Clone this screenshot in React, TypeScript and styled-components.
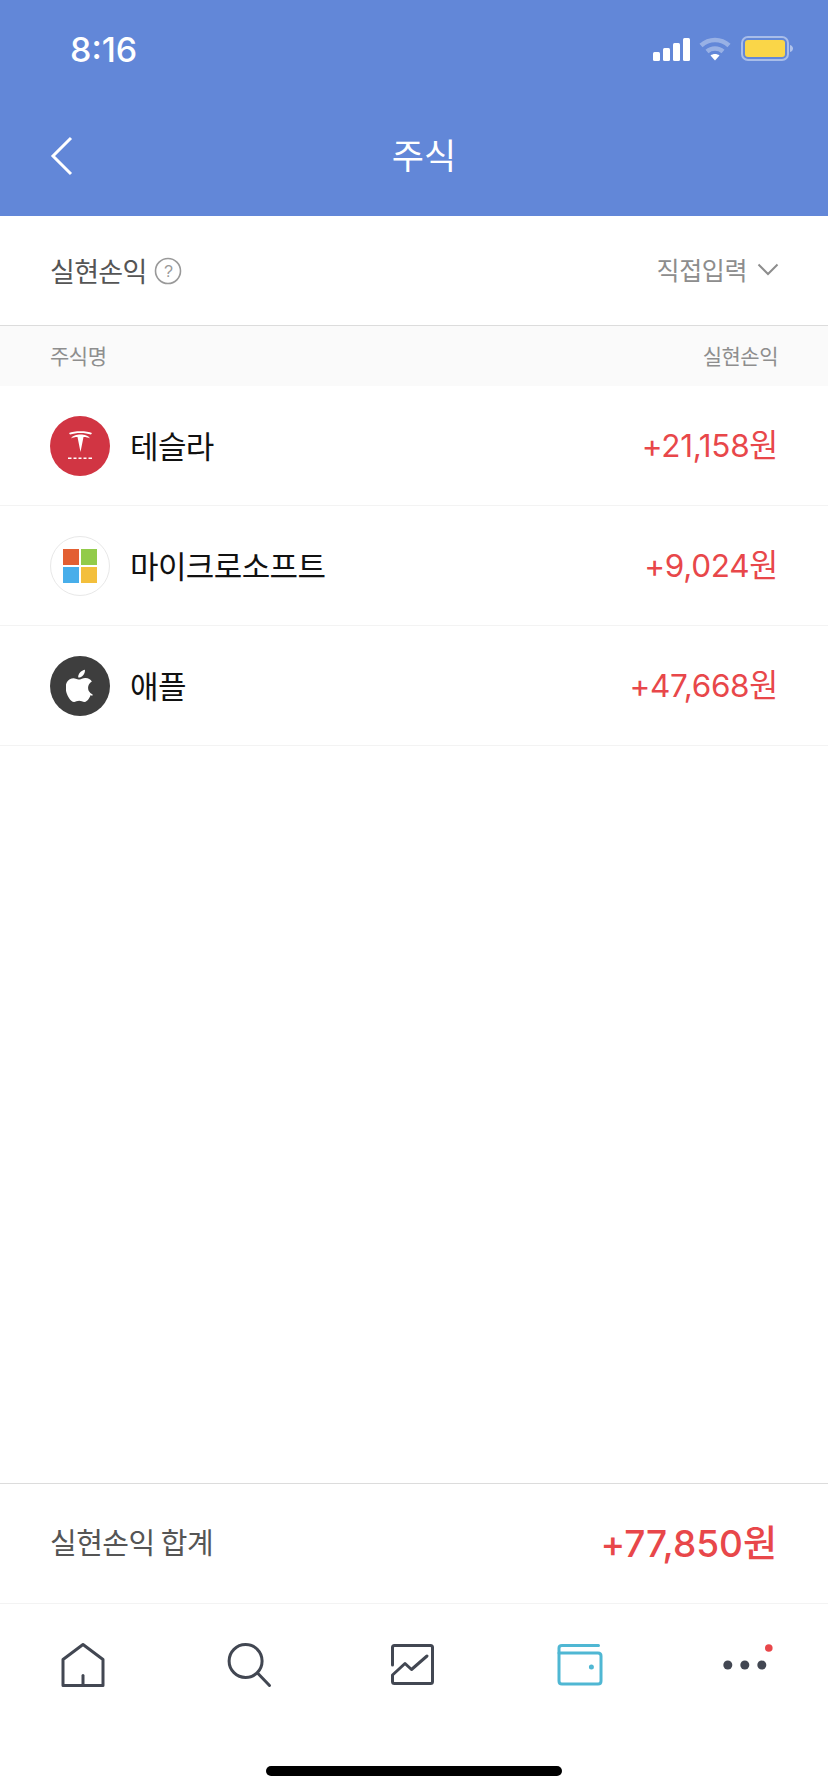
import React from "react";
import styled, { createGlobalStyle } from "styled-components";

const Global = createGlobalStyle`
  html, body { margin: 0; padding: 0; background: #fff; }
  * { box-sizing: border-box; }
`;
const KR = `"Noto Sans CJK KR", "Noto Sans", sans-serif`;
const NUM = `Inter, "Noto Sans CJK KR", sans-serif`;

const Page = styled.div`
  width: 828px; height: 1792px; display: flex; flex-direction: column; font-family: ${KR}; background: #fff; overflow: hidden;
`;
const Header = styled.header`
  height: 216px; background: #6287d8; display: flex; flex-direction: column; flex: none;
`;
const StatusBar = styled.div`
  height: 100px; padding: 29px 34px 0 70px; display: flex; align-items: flex-start; justify-content: space-between;
`;
const Time = styled.span`
  color: #fff; font: 500 34px/42px Inter, sans-serif;
`;
const StatusIcons = styled.div`
  display: flex; align-items: center; gap: 9px; margin-top: 7px;
`;
const NavBar = styled.div`
  position: relative; height: 116px; display: flex; align-items: center; justify-content: center; padding: 0 0 8px 20px;
`;
const BackButton = styled.span`
  position: absolute; left: 50px; top: 36px; display: flex;
`;
const Title = styled.h1`
  margin: 0; color: #fff; font: 400 35px/46px ${KR};
`;
const TopRow = styled.div`
  height: 110px; flex: none; border-bottom: 1px solid #dcdcdc; padding: 0 50px; display: flex; align-items: center; justify-content: space-between;
`;
const TopLabel = styled.div`
  display: flex; align-items: center; gap: 7px; font: 400 27px/36px ${KR}; color: #555; letter-spacing: -0.7px;
`;
const Selector = styled.div`
  display: flex; align-items: center; gap: 10px; font: 400 25px/36px ${KR}; color: #8d8d8d; letter-spacing: -0.4px; padding-bottom: 3px; margin-right: -1px;
`;
const ColumnHead = styled.div`
  height: 60px; flex: none; background: #fafafa; padding: 0 50px 3px; display: flex; align-items: center; justify-content: space-between; font: 400 21px/30px ${KR}; color: #8e8e8e; letter-spacing: -0.5px;
`;
const List = styled.ul`
  list-style: none; margin: 0; padding: 0; flex: 1;
`;
const Row = styled.li`
  height: 120px; border-bottom: 1px solid #f3f3f3; padding: 0 50px; display: flex; align-items: center; gap: 20px;
`;
const Logo = styled.span<{ $bg: string; $ring?: boolean }>`
  width: 60px; height: 60px; border-radius: 50%; flex: none; display: flex; align-items: center; justify-content: center;
  background: ${p => p.$bg};
  border: ${p => (p.$ring ? "1px solid #e8e8e8" : "none")};
`;
const Name = styled.span`
  flex: 1; color: #111; font: 400 31px/40px ${KR}; letter-spacing: -0.6px; margin-bottom: 2px;
`;
const Amount = styled.span`
  color: #e8474a; font: 400 31.500px/40px ${NUM}; letter-spacing: -0.3px;
`;
const TotalRow = styled.div`
  height: 121px; flex: none; border-top: 1px solid #dcdcdc; border-bottom: 1px solid #f3f3f3; padding: 0 51px 0 50px; display: flex; align-items: center; justify-content: space-between;
`;
const TotalLabel = styled.span`
  font: 400 29px/40px ${KR}; color: #555; letter-spacing: -0.5px; margin-bottom: 6px;
`;
const TotalValue = styled.span`
  font: 500 37px/48px ${NUM}; color: #e8474a;
`;
const TabBar = styled.nav`
  height: 188px; flex: none; display: flex; flex-direction: column; align-items: center;
`;
const Tabs = styled.div`
  width: 100%; height: 162px; padding-top: 31px; display: flex; align-items: flex-start;
`;
const Tab = styled.span`
  flex: 1; height: 60px; display: flex; align-items: center; justify-content: center;
`;
const HomeIndicator = styled.div`
  width: 296px; height: 10px; border-radius: 5px; background: #000;
`;

const Signal = () => (
  <svg width="37" height="23" viewBox="0 0 37 23" fill="#fff">
    <rect x="0" y="14" width="7" height="9" rx="1.5" />
    <rect x="10" y="10" width="7" height="13" rx="1.5" />
    <rect x="20" y="5" width="7" height="18" rx="1.5" />
    <rect x="30" y="0" width="7" height="23" rx="1.5" />
  </svg>
);
const Wifi = () => (
  <svg width="32" height="24" viewBox="0 0 32 24" fill="none">
    <path d="M2 8.500C10 1 22 1 30 8.500" stroke="#fff" strokeOpacity=".35" strokeWidth="4.500" />
    <path d="M8 14.500C12.500 10.500 19.500 10.500 24 14.500" stroke="#fff" strokeOpacity=".35" strokeWidth="4.500" />
    <path d="M11.500 18.500C14 16.500 18 16.500 20.500 18.500L16 23.500Z" fill="#fff" />
  </svg>
);
const Battery = () => (
  <svg width="53" height="26" viewBox="0 0 53 26" style={{ marginLeft: 1 }}>
    <rect x="1" y="1" width="46" height="23" rx="6" fill="none" stroke="#fff" strokeOpacity=".45" strokeWidth="2" />
    <rect x="4" y="4" width="40" height="17" rx="3" fill="#fad648" />
    <path d="M49 9C51 9.500 52 11 52 12.500S51 15.500 49 16Z" fill="#fff" fillOpacity=".5" />
  </svg>
);
const Back = () => (
  <svg width="24" height="40" viewBox="0 0 24 40" fill="none" stroke="#fff" strokeWidth="3">
    <path d="M21 2L3 20L21 38" />
  </svg>
);
const Help = () => (
  <svg width="28" height="28" viewBox="0 0 28 28">
    <circle cx="14" cy="14" r="12.500" fill="none" stroke="#999" strokeWidth="1.600" />
    <text x="14" y="19.500" textAnchor="middle" fontSize="16" fill="#999" fontFamily="Liberation Sans, sans-serif">?</text>
  </svg>
);
const Chevron = () => (
  <svg width="22" height="13" viewBox="0 0 22 13" fill="none" stroke="#8d8d8d" strokeWidth="2">
    <path d="M1.500 1.500L11 11L20.500 1.500" />
  </svg>
);
const TeslaMark = () => (
  <svg width="60" height="60" viewBox="0 0 60 60" fill="#fff">
    <path d="M30.500 36L33.500 21C36 21 38.500 21.500 40 22.500C38.500 19.500 34.500 18.500 30.500 18.500S22.500 19.500 21 22.500C22.500 21.500 25 21 27.500 21Z" />
    <path d="M19 17C24 14.800 37 14.800 42 17L41 18.500C35 16.400 26 16.400 20 18.500Z" />
    <rect x="18" y="41.500" width="3.500" height="1.500" />
    <rect x="23.500" y="41.500" width="3" height="1.500" />
    <rect x="28.500" y="41.500" width="3" height="1.500" />
    <rect x="33.500" y="41.500" width="3" height="1.500" />
    <rect x="38.500" y="41.500" width="3.500" height="1.500" />
  </svg>
);
const MicrosoftMark = () => (
  <svg width="34" height="34" viewBox="0 0 34 34">
    <rect width="16" height="16" fill="#e35f32" />
    <rect x="18" width="16" height="16" fill="#92cb4a" />
    <rect y="18" width="16" height="16" fill="#48aeea" />
    <rect x="18" y="18" width="16" height="16" fill="#f3bf3c" />
  </svg>
);
const AppleMark = () => (
  <svg width="28" height="34" viewBox="0 0 170 200" fill="#fff">
    <path d="M150 155c-3 7-6 13-10 19-5 8-10 13-13 16-5 5-10 7-16 7-4 0-9-1-15-4-6-2-11-4-16-4s-11 1-17 4c-6 2-10 4-14 4-6 0-11-2-17-7-4-3-8-9-14-17-6-8-10-18-14-29-4-12-6-24-6-35 0-13 3-24 8-33 4-7 10-13 17-17s15-6 23-6c4 0 10 1 18 4s13 4 15 4 7-1 17-5c9-3 17-5 23-4 17 1 30 8 38 20-15 9-23 22-23 38 0 13 5 23 14 32 4 4 9 7 14 9-1 3-2 6-3 9zM115 8c0 10-4 19-11 27-8 10-19 15-30 14v-4c0-9 4-19 11-27 4-4 8-8 14-11s11-4 16-5v6z" />
  </svg>
);
const IconSvg = styled.svg.attrs({ width: 60, height: 60, viewBox: "0 0 60 60" })<{ $color?: string }>`
  fill: none; stroke: ${p => p.$color || "#424752"}; stroke-width: 3; stroke-linejoin: round; stroke-linecap: round;
`;
const HomeIcon = () => (
  <IconSvg>
    <path d="M10 24.500L30 9.500L50 24.500V50.500H10Z" />
    <path d="M30 40.500V50" />
  </IconSvg>
);
const SearchIcon = () => (
  <IconSvg>
    <circle cx="27.600" cy="26" r="16.500" />
    <path d="M40 38.500L51.500 50.500" />
  </IconSvg>
);
const ChartIcon = () => (
  <IconSvg>
    <path d="M8.500 30V12.500Q8.500 10.500 10.500 10.500H46.500Q48.500 10.500 48.500 12.500V46.500Q48.500 48.500 46.500 48.500H10.500Q8.500 48.500 8.500 46.500V40L21 28.500L27.500 34.500L43 21" />
  </IconSvg>
);
const WalletIcon = () => (
  <IconSvg $color="#4fb7d3">
    <path d="M9 18V13Q9 10.500 12 10.500H48.500" />
    <path d="M9 18H48Q51 18 51 21V46Q51 49 48 49H12Q9 49 9 46V18" />
    <circle cx="41.400" cy="32" r="1" fill="#4fb7d3" />
  </IconSvg>
);
const MoreIcon = () => (
  <svg width="60" height="60" viewBox="0 0 60 60" fill="#424752">
    <circle cx="12.800" cy="30" r="4.500" />
    <circle cx="29.800" cy="30" r="4.500" />
    <circle cx="46.800" cy="30" r="4.500" />
    <circle cx="53.800" cy="13" r="3.800" fill="#e8474a" />
  </svg>
);

const stocks = [
  { name: "테슬라", amount: "+21,158원", bg: "#d13543", logo: <TeslaMark /> },
  { name: "마이크로소프트", amount: "+9,024원", bg: "#fff", ring: true, logo: <MicrosoftMark /> },
  { name: "애플", amount: "+47,668원", bg: "#3e3e3e", logo: <AppleMark /> },
];

export default function App() {
  return (
    <Page>
      <Global />
      <Header>
        <StatusBar>
          <Time>8:16</Time>
          <StatusIcons>
            <Signal />
            <Wifi />
            <Battery />
          </StatusIcons>
        </StatusBar>
        <NavBar>
          <BackButton><Back /></BackButton>
          <Title>주식</Title>
        </NavBar>
      </Header>
      <TopRow>
        <TopLabel>실현손익 <Help /></TopLabel>
        <Selector>직접입력 <Chevron /></Selector>
      </TopRow>
      <ColumnHead>
        <span>주식명</span>
        <span>실현손익</span>
      </ColumnHead>
      <List>
        {stocks.map(s => (
          <Row key={s.name}>
            <Logo $bg={s.bg} $ring={s.ring}>{s.logo}</Logo>
            <Name>{s.name}</Name>
            <Amount>{s.amount}</Amount>
          </Row>
        ))}
      </List>
      <TotalRow>
        <TotalLabel>실현손익 합계</TotalLabel>
        <TotalValue>+77,850원</TotalValue>
      </TotalRow>
      <TabBar>
        <Tabs>
          <Tab><HomeIcon /></Tab>
          <Tab><SearchIcon /></Tab>
          <Tab><ChartIcon /></Tab>
          <Tab><WalletIcon /></Tab>
          <Tab><MoreIcon /></Tab>
        </Tabs>
        <HomeIndicator />
      </TabBar>
    </Page>
  );
}
